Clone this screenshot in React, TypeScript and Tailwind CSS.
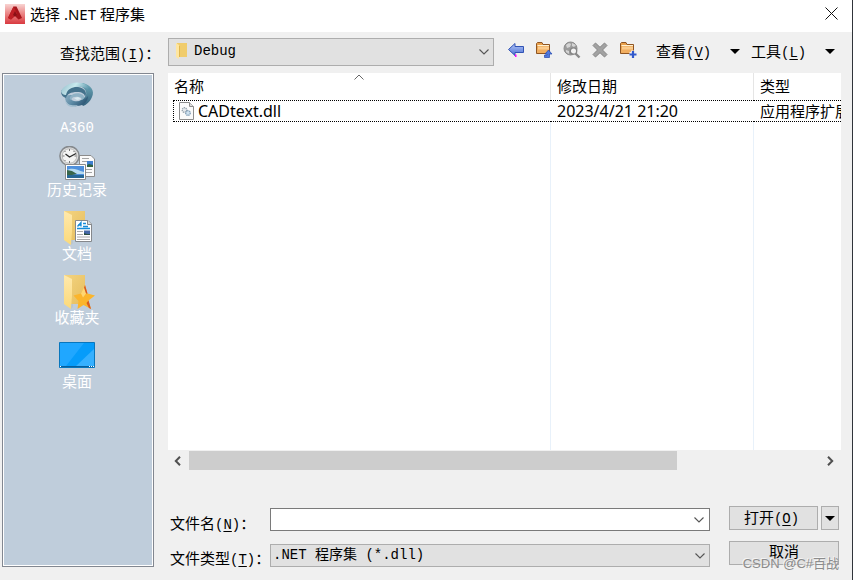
import React, { useState } from "react";

const song = "font-['Liberation_Mono','Noto_Sans_CJK_SC',monospace]";
const ui = "font-['Noto_Sans','Noto_Sans_CJK_SC',sans-serif]";

function Mnemonic({ text, letter, colon }: { text: string; letter: string; colon?: boolean }) {
  return (
    <span className="pt-[3px] text-[15px] leading-5 whitespace-nowrap">
      {text}
      <span className="text-[14px]">
        (<u className="underline-offset-2">{letter}</u>)
      </span>
      {colon ? "：" : ""}
    </span>
  );
}

function Chevron({ className = "" }: { className?: string }) {
  return (
    <svg className={className} width="10" height="6" viewBox="0 0 10 6" fill="none" stroke="#555" strokeWidth="1.1">
      <path d="M.5.5 5 5 9.500.5" />
    </svg>
  );
}

function Triangle() {
  return (
    <svg width="10" height="5" viewBox="0 0 10 5" aria-hidden="true">
      <path d="M0 0h10L5 5z" fill="#000" />
    </svg>
  );
}

function AppLogo() {
  return (
    <svg width="20" height="20" viewBox="0 0 20 20" aria-hidden="true">
      <defs>
        <linearGradient id="logo" x2="0" y2="1">
          <stop stopColor="#f8d4d2" />
          <stop offset=".45" stopColor="#ec8a8a" />
          <stop offset="1" stopColor="#d93a40" />
        </linearGradient>
      </defs>
      <path d="M0 0h20v20H0z" fill="url(#logo)" />
      <path d="M8.500 2.500h3L17 14l-3.500 1.500L10 12l-4 3.500L3 14z" fill="#a5151b" />
      <path d="m8.500 2.500 3.500 7-4 4-2 2L3 14z" fill="#c02026" />
      <path d="m10 7 2 4-2 1.500L8 11z" fill="#8a1016" />
    </svg>
  );
}

function SmallFolder() {
  return (
    <svg width="14" height="18" viewBox="0 0 14 18" aria-hidden="true">
      <path d="M2 1h10v14H2z" fill="#f0cc6c" />
      <path d="m1 1 3 2v14l-3-2z" fill="#ffe6a0" />
      <path d="M4 4h1v11H4z" fill="#dfb650" />
    </svg>
  );
}

function BackIcon() {
  return (
    <svg width="18" height="18" viewBox="0 0 18 18">
      <defs>
        <linearGradient id="arrow" x2="0" y2="1">
          <stop stopColor="#b4c8f8" />
          <stop offset="1" stopColor="#4a6fd4" />
        </linearGradient>
      </defs>
      <path d="M1.500 8.500 8 2.500v3h8.500v6H8v3z" fill="url(#arrow)" stroke="#3153b4" />
      <path d="M8 13.500h1.500V16H8z" fill="#f0f" />
    </svg>
  );
}

function OrangeFolder({ children }: { children: React.ReactNode }) {
  return (
    <svg width="18" height="18" viewBox="0 0 18 18">
      <path d="M1.500 12.500v-10l1-1H7l1 2h6.500v9z" fill="#e8a04c" stroke="#8f5523" />
      <path d="M3 5.500h11v6H2.500z" fill="#fbcb8c" />
      <path d="M3 8.500h11V12H2.500z" fill="#f2ae60" />
      <path d="M2.500 4.500h11.500" stroke="#fff0d0" />
      {children}
    </svg>
  );
}

function SearchWebIcon() {
  return (
    <svg width="18" height="18" viewBox="0 0 18 18" fill="none">
      <circle cx="7.500" cy="7.500" r="6.500" fill="#9c9c9c" stroke="#8b8b8b" />
      <path d="M3 4c2-2 4-2 5-1L7 6 4 7zM9 2l4 2-2 2-2-1zM3 9l3 1v3l-3-2z" fill="#d4d4d4" />
      <path d="m12.500 12.500 4 4" stroke="#8a8a8a" strokeWidth="2.400" />
      <circle cx="10.500" cy="10" r="3.200" fill="#f2f2f2" stroke="#858585" strokeWidth="1.300" />
    </svg>
  );
}

function DeleteIcon() {
  return (
    <svg width="18" height="18" viewBox="0 0 18 18">
      <path d="M2 4.500 4.500 2 9 6.300 13.500 2 16 4.500 11.500 9l4.500 4.500-2.500 2.500L9 11.700 4.500 16 2 13.500 6.500 9z" fill="#a2a2a2" stroke="#858585" />
    </svg>
  );
}

function A360Icon() {
  return (
    <svg width="36" height="36" viewBox="0 0 36 36">
      <defs>
        <linearGradient id="swirlTop" x1="0" y1="0" x2="1" y2=".3">
          <stop stopColor="#8fb9c8" />
          <stop offset=".5" stopColor="#c9eaee" />
          <stop offset="1" stopColor="#5792a8" />
        </linearGradient>
        <linearGradient id="swirlBowl" x2="1" y2=".4">
          <stop stopColor="#8fb0c4" />
          <stop offset=".5" stopColor="#5c8aa5" />
          <stop offset="1" stopColor="#2f5876" />
        </linearGradient>
        <linearGradient id="swirlRight" x2="0" y2="1">
          <stop stopColor="#6ea9b8" />
          <stop offset="1" stopColor="#34617d" />
        </linearGradient>
      </defs>
      <path d="M24 1c8 2 12 8 9 14-2 5-6 8-9 9l-4-5c5-2 8-5 7-9-1-4-5-6-9-6z" fill="url(#swirlRight)" />
      <path d="M6 15c0 7 6 10 12 9 6 0 11-4 11-10-3 4-9 6-14 5-4-1-4-4-1-6-4 0-7 0-8 2z" fill="url(#swirlBowl)" />
      <path d="M2 9c0 4 2 6 5 7 1-4 5-6 11-6 5 0 8 2 8 5 3-5-1-9-7-10C12 4 5 5 2 9z" fill="#44728c" />
      <path d="M2 9C5 3 14-1 22 1c6 1 10 5 10 9-4-5-10-6-16-5-5 1-8 3-9 8-3 0-5-2-5-4z" fill="url(#swirlTop)" />
      <path d="M11 15c2-4 9-5 13-2 2 2 1 4-1 5 0-3-4-4-7-3-3 0-4 2-3 3-2 0-3-1-2-3z" fill="#8fb2c5" />
      <path d="m15 16 4-1 3 2-4 1z" fill="#d8e9ef" />
      <path d="M6 18c2 5 7 6 13 5-5 4-12 2-13-5z" fill="#a4bfd0" />
    </svg>
  );
}

function HistoryIcon() {
  return (
    <svg width="36" height="36" viewBox="0 0 36 36">
      <path d="M20.500 9.500H32l3.500 3.500v17.500h-15z" fill="#fafafa" stroke="#8c8c8c" />
      <path d="M23 12.500h7m-7 3h5m-5 8h10m-10 3h10" stroke="#a4a4a4" />
      <path d="M28 15h6v6h-6z" fill="#3f7fd0" />
      <path d="m28 19 2-1 4 1v2h-6z" fill="#2f6242" />
      <circle cx="10.500" cy="10" r="9.600" fill="#dcdcdc" stroke="#85898d" strokeWidth="1.500" />
      <circle cx="10.500" cy="10" r="7.300" fill="#f4f4f4" stroke="#bbb" />
      <path d="M10.500 3v2m0 10v2m-7-7h2m10 0h2M5.500 5l1 1m9-1-1 1m-9 9 1-1" stroke="#777" />
      <path d="m6.500 8 4 3L17 7.500" stroke="#2a2a2a" strokeWidth="1.300" fill="none" />
      <path d="M6.500 18.500h20v15h-20z" fill="#fff" stroke="#8c8c8c" />
      <path d="M8 20h17v12H8z" fill="#4f90dc" />
      <path d="M8 24c6-3 10 0 17 2v2H8z" fill="#b7dbf0" />
      <path d="m8 24 5 1 5 3-10 2z" fill="#39674b" />
      <path d="M8 29h17v3H8z" fill="#286895" />
    </svg>
  );
}

function FolderIcon({ children }: { children: React.ReactNode }) {
  return (
    <svg width="36" height="36" viewBox="0 0 36 36">
      <defs>
        <linearGradient id="folderBack" x2="1" y2="1">
          <stop stopColor="#f4d481" />
          <stop offset="1" stopColor="#e5bd5d" />
        </linearGradient>
        <linearGradient id="folderFront" x2="0" y2="1">
          <stop stopColor="#ffe9ad" />
          <stop offset="1" stopColor="#fbd979" />
        </linearGradient>
      </defs>
      <path d="M5 1h21v29H5z" fill="url(#folderBack)" />
      <path d="m5 1 8 4v16l-1 14-7-5z" fill="url(#folderFront)" />
      <path d="M12 30v5l2-2v-3z" fill="#b6bdc0" opacity=".5" />
      {children}
    </svg>
  );
}

function DesktopIcon() {
  return (
    <svg width="36" height="36" viewBox="0 0 36 36">
      <path d="M.5 4.500h35v25H.5z" fill="#069cfa" stroke="#0876bd" />
      <path d="M1 5h24L7 28H1z" fill="#20a7ff" />
      <path d="M35 11v17H17z" fill="#36b0ff" />
      <path d="M1 28h34v1H1z" fill="#075f9d" />
      <path d="M1 28.500h1M30 28.500h1m1 0h1m1 0h1" stroke="#fff" />
    </svg>
  );
}

function DllIcon() {
  return (
    <svg width="15" height="18" viewBox="0 0 15 18" aria-hidden="true">
      <path d="M.5.5h10l4 4v13H.5z" fill="#fafafa" stroke="#8d8d8d" />
      <path d="M10.500.5v4h4" fill="#ddd" stroke="#8d8d8d" />
      <circle cx="5.500" cy="8" r="2.300" fill="#e4e8ec" stroke="#93a0aa" strokeDasharray="1.200 .6" strokeWidth="1.300" />
      <circle cx="9" cy="11" r="2.300" fill="#cfe1ef" stroke="#7d9cb5" strokeDasharray="1.200 .6" strokeWidth="1.300" />
    </svg>
  );
}

const places = [
  { name: "A360", size: "text-[14px]", icon: <A360Icon /> },
  { name: "历史记录", size: "text-[15px]", icon: <HistoryIcon /> },
  {
    name: "文档",
    size: "text-[15px]",
    icon: (
      <FolderIcon>
        <path d="M16.500 10.500H29l3.500 3.500v17.500h-16z" fill="#fff" stroke="#85888c" />
        <path d="M28.500 10.500v4h4" fill="#ddd" stroke="#85888c" />
        <path d="m18.500 16.500 3.500-4v4m-3-1.500h3M24 13.500h3M24 16.500h5m-11 2h13" stroke="#168bd8" strokeWidth="1.300" fill="none" />
        <path d="M18 21.500h6m-6 3h6m-6 2.500h13m-13 2.500h13" stroke="#aaa" />
        <path d="M25 20.500h6v4.500h-6z" fill="#4567a5" />
        <path d="m25 23 3 1h3v1h-6z" fill="#2d4f42" />
      </FolderIcon>
    ),
  },
  {
    name: "收藏夹",
    size: "text-[15px]",
    icon: (
      <FolderIcon>
        <path d="m26 11 2.500 8.500 7.500 2-6.500 5L32 35l-7.500-4-6 4 1-8-5-5.500 7.500-2z" fill="#fbb52c" />
        <path d="m26 11 1 8.500-3 4-2-4z" fill="#ffd672" />
        <path d="m26 11 2.500 8.500h-1.500l-2-6zM29.500 26.500 32 35l-2-1-2.500-5z" fill="#d65b22" />
      </FolderIcon>
    ),
  },
  { name: "桌面", size: "text-[15px]", icon: <DesktopIcon /> },
];

const tools = [
  { label: "返回", icon: <BackIcon /> },
  {
    label: "上一级",
    icon: (
      <OrangeFolder>
        <path d="M9.500 14v2.500h5V13H17l-3.500-4-3.500 4h2v1z" fill="#4f78df" stroke="#2448ad" strokeWidth=".7" />
      </OrangeFolder>
    ),
  },
  { label: "搜索 Web", icon: <SearchWebIcon /> },
  { label: "删除", icon: <DeleteIcon /> },
  {
    label: "创建新文件夹",
    icon: (
      <OrangeFolder>
        <path d="M14 9.500v7M10.500 13h7" stroke="#f0f0f0" strokeWidth="4" />
        <path d="M14 10v7M10.500 13.500h7" stroke="#3159cc" strokeWidth="2.200" />
      </OrangeFolder>
    ),
  },
];

export default function App() {
  const [fileName, setFileName] = useState("");
  return (
    <div className={`flex min-h-screen flex-col border-r border-[#30343a] bg-[#f0f0f0] text-black ${song}`}>
      <header className={`flex h-8 items-center justify-between bg-white pr-[11px] pl-[5px] ${ui}`}>
        <div className="flex items-center gap-[5px] pb-1">
          <AppLogo />
          <h1 className="text-[15px] leading-5">选择 .NET 程序集</h1>
        </div>
        <button aria-label="关闭" className="flex size-5 items-center justify-center pb-1.5">
          <svg width="13" height="13" viewBox="0 0 13 13" stroke="#111">
            <path d="m.5.5 12 12m0-12-12 12" />
          </svg>
        </button>
      </header>

      <div className="flex h-[41px] items-center pr-[17px] pb-px">
        <label htmlFor="folder" className="flex w-[168px] shrink-0 pt-1 pl-[60px]">
          <Mnemonic text="查找范围" letter="I" colon />
        </label>
        <div className="relative min-w-40 flex-1">
          <select id="folder" className="h-7 w-full appearance-none border border-[#adadad] bg-[#e1e1e1] pb-[2px] pl-[25px] text-[14px]">
            <option>Debug</option>
          </select>
          <span className="pointer-events-none absolute top-1 left-[7px]"><SmallFolder /></span>
          <Chevron className="pointer-events-none absolute top-[11px] right-[5px]" />
        </div>
        <div className="ml-2 flex shrink-0 pb-1">
          {tools.map((t) => (
            <button key={t.label} aria-label={t.label} className="flex h-6 w-7 items-center justify-center">
              {t.icon}
            </button>
          ))}
        </div>
        <div className="ml-[14px] flex shrink-0 gap-[11px] pb-px">
          <button className="flex w-[84px] items-center justify-between">
            <Mnemonic text="查看" letter="V" />
            <Triangle />
          </button>
          <button className="flex w-[84px] items-center justify-between">
            <Mnemonic text="工具" letter="L" />
            <Triangle />
          </button>
        </div>
      </div>

      <main className="flex flex-1 gap-[14px] pr-[11px] pb-[13px] pl-[2px]">
        <nav className="w-[152px] shrink-0 border border-[#828790] bg-white p-px">
          <ul className="h-full bg-[#bfcddb]">
            {places.map((p) => (
              <li key={p.name}>
                <button className="flex h-16 w-full flex-col items-center gap-px pt-[7px] pr-[2px] text-white">
                  {p.icon}
                  <span className={`leading-[18px] ${p.size}`}>{p.name}</span>
                </button>
              </li>
            ))}
          </ul>
        </nav>

        <div className="flex min-w-0 flex-1 flex-col">
          <div className={`flex flex-1 overflow-hidden bg-white pl-[5px] ${ui}`}>
            <table className="w-full table-fixed border-separate border-spacing-0 text-left text-[15px] leading-5">
              <colgroup>
                <col />
                <col className="w-[203px]" />
                <col className="w-[87px]" />
              </colgroup>
              <thead>
                <tr className="h-[27px]">
                  <th className="relative border-r border-[#e5e5e5] p-0 pb-[2px] pl-px font-normal">
                    名称
                    <svg className="absolute top-px left-[181px]" width="10" height="6" viewBox="0 0 10 6" fill="none" stroke="#666">
                      <path d="m.5 5.500 4.500-4.500 4.500 4.500" />
                    </svg>
                  </th>
                  <th className="border-r border-[#e5e5e5] p-0 pb-[2px] pl-[6px] font-normal">修改日期</th>
                  <th className="p-0 pb-[2px] pl-[6px] font-normal">类型</th>
                </tr>
              </thead>
              <tbody>
                <tr className="h-[22px]">
                  <td className="border-y border-l border-dotted border-black p-0 pl-[5px] text-[16px] leading-5">
                    <span className="flex items-center gap-1"><DllIcon />CADtext.dll</span>
                  </td>
                  <td className="border-y border-dotted border-black p-0 pl-[6px] text-[16px] leading-5">2023/4/21 21:20</td>
                  <td className="overflow-hidden border-y border-dotted border-black p-0 pl-[6px] whitespace-nowrap">应用程序扩展</td>
                </tr>
                <tr aria-hidden="true">
                  <td className="border-r border-[#e8f1fa] p-0" />
                  <td className="border-r border-[#e8f1fa] p-0" />
                  <td className="p-0" />
                </tr>
              </tbody>
            </table>
          </div>
          <div className="flex h-5 items-center pt-px">
            <button aria-label="向左滚动" className="flex h-full w-[21px] items-center justify-center pr-[2px]">
              <svg width="7" height="10" viewBox="0 0 7 10" fill="none" stroke="#505050" strokeWidth="2"><path d="M6 .8 1.800 5 6 9.200" /></svg>
            </button>
            <div className="flex h-full flex-1">
              <div className="flex-[488] bg-[#cdcdcd]" />
              <div className="flex-[143]" />
            </div>
            <button aria-label="向右滚动" className="flex h-full w-[21px] items-center justify-center">
              <svg width="7" height="10" viewBox="0 0 7 10" fill="none" stroke="#505050" strokeWidth="2"><path d="M1 .8 5.200 5 1 9.200" /></svg>
            </button>
          </div>

          <form className="flex pt-9 pr-[2px] pl-[2px]" onSubmit={(e) => e.preventDefault()}>
            <div className="flex w-[100px] shrink-0 flex-col gap-[15px] pt-[6px]">
              <label htmlFor="name" className="flex h-5"><Mnemonic text="文件名" letter="N" colon /></label>
              <label htmlFor="type" className="flex h-5"><Mnemonic text="文件类型" letter="T" colon /></label>
            </div>
            <div className="flex min-w-0 flex-1 flex-col gap-[13px] pt-[2px]">
              <div className="flex h-[23px] border border-[#7a7a7a] bg-white">
                <input id="name" value={fileName} onChange={(e) => setFileName(e.target.value)} className="min-w-0 flex-1 px-1 text-[14px] outline-none" />
                <button type="button" aria-label="文件名列表" className="flex w-5 items-center justify-center"><Chevron /></button>
              </div>
              <div className="relative">
                <select id="type" className="block h-[23px] w-full appearance-none border border-[#adadad] bg-[#e1e1e1] pl-[2px] text-[14px]">
                  <option>.NET 程序集 (*.dll)</option>
                </select>
                <Chevron className="pointer-events-none absolute top-[9px] right-[5px]" />
              </div>
            </div>
            <div className="relative ml-[19px] flex w-[110px] shrink-0 flex-col gap-[11px]">
              <div className="flex h-6 gap-[3px]">
                <button type="submit" className="flex flex-1 items-center justify-center border border-[#adadad] bg-[#e1e1e1] pr-1">
                  <Mnemonic text="打开" letter="O" />
                </button>
                <button type="button" aria-label="打开选项" className="flex w-[18px] items-center justify-center border border-[#adadad] bg-[#e1e1e1]">
                  <Triangle />
                </button>
              </div>
              <button type="button" className="h-6 border border-[#adadad] bg-[#e1e1e1] pt-px text-[15px] leading-5">取消</button>
              <span className="pointer-events-none absolute top-12 right-0 font-['Liberation_Sans','Noto_Sans_CJK_SC',sans-serif] text-[13px] leading-5 whitespace-nowrap text-[#8c8c8c] [text-shadow:-1px_-1px_0_#f4f4f4]">
                CSDN @C#百战
              </span>
            </div>
          </form>
        </div>
      </main>
    </div>
  );
}
